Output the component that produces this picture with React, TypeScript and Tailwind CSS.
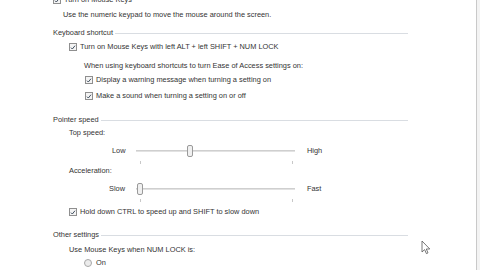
import React from 'react';

// 勾选框
const Check = () => (
  <span className="inline-flex w-[8px] h-[8px] border border-[#8f8f8f] bg-[#f4f4f4] items-center justify-center shrink-0">
    <svg viewBox="0 0 8 8" className="w-[7px] h-[7px]">
      <path d="M1.3 4.2 L3.1 6 L6.7 1.6" stroke="#3c4a5c" strokeWidth="1.3" fill="none" />
    </svg>
  </span>
);

const Row = ({ mt, pl, children }: { mt: number; pl: number; children: React.ReactNode }) => (
  <div className="h-[12px] flex items-center whitespace-nowrap" style={{ marginTop: mt, paddingLeft: pl }}>
    {children}
  </div>
);

const CheckRow = ({ mt, pl, label }: { mt: number; pl: number; label: string }) => (
  <Row mt={mt} pl={pl}>
    <Check />
    <span className="ml-[3px]">{label}</span>
  </Row>
);

const Group = ({ mt, label }: { mt: number; label: string }) => (
  <Row mt={mt} pl={53}>
    <span>{label}</span>
    <div className="ml-[2px] h-px bg-[#d9dde2] flex-1 mr-[72px]" />
  </Row>
);

const Slider = ({ mt, left, right, labelX, pos }: { mt: number; left: string; right: string; labelX: number; pos: number }) => (
  <Row mt={mt} pl={labelX}>
    <span className="shrink-0" style={{ width: 136 - labelX }}>{left}</span>
    <div className="relative w-[159px] h-[12px] shrink-0">
      <div className="absolute left-0 right-0 top-[5px] h-[2px] bg-[#e2e2e2] border-t border-[#cfcfcf]" />
      <div className="absolute top-[16px] left-[4px] w-px h-[3px] bg-[#c8c8c8]" />
      <div className="absolute top-[16px] right-[2px] w-px h-[3px] bg-[#c8c8c8]" />
      <div
        className="absolute top-[0px] w-[6px] h-[12px] rounded-[2px] border border-[#9a9a9a] bg-[#f0f0f0]"
        style={{ left: pos }}
      />
    </div>
    <span className="ml-[12px]">{right}</span>
  </Row>
);

export default function App() {
  return (
    <div
      className="relative w-[480px] h-[270px] overflow-hidden bg-white text-[#333333] text-[7.4px]"
      style={{ fontFamily: '"Liberation Sans", Arial, sans-serif' }}
    >
      <div className="flex flex-col -mt-[6px]">
        <CheckRow mt={0} pl={53} label="Turn on Mouse Keys" />
        <Row mt={3} pl={63}>Use the numeric keypad to move the mouse around the screen.</Row>
        <Group mt={6} label="Keyboard shortcut" />
        <CheckRow mt={2} pl={69} label="Turn on Mouse Keys with left ALT + left SHIFT + NUM LOCK" />
        <Row mt={7} pl={84}>When using keyboard shortcuts to turn Ease of Access settings on:</Row>
        <CheckRow mt={2} pl={85} label="Display a warning message when turning a setting on" />
        <CheckRow mt={4} pl={85} label="Make a sound when turning a setting on or off" />
        <Group mt={12} label="Pointer speed" />
        <Row mt={1} pl={69}>Top speed:</Row>
        <Slider mt={6} left="Low" right="High" labelX={112} pos={51} />
        <Row mt={8} pl={69}>Acceleration:</Row>
        <Slider mt={6} left="Slow" right="Fast" labelX={109} pos={1} />
        <CheckRow mt={11} pl={69} label="Hold down CTRL to speed up and SHIFT to slow down" />
        <Group mt={11} label="Other settings" />
        <Row mt={3} pl={69}>Use Mouse Keys when NUM LOCK is:</Row>
        <Row mt={1} pl={84}>
          <span className="w-[8px] h-[8px] rounded-full border border-[#a8a8a8] bg-[#ececec] shrink-0" />
          <span className="ml-[4px]">On</span>
        </Row>
      </div>

      {/* 滚动条边缘 */}
      <div className="absolute top-0 bottom-0 left-[476px] w-px bg-[#c9c9c9]" />
      <div className="absolute top-0 bottom-0 left-[477px] w-[3px] bg-[#f3f3f3]" />

      {/* 鼠标指针 */}
      <svg className="absolute left-[421px] top-[240px]" width="10" height="15" viewBox="0 0 10 15">
        <path d="M1 1 L1 12 L3.6 9.6 L5.4 13.6 L7 12.9 L5.3 9 L8.8 9 Z" fill="#fff" stroke="#555" strokeWidth="0.8" />
      </svg>
    </div>
  );
}
